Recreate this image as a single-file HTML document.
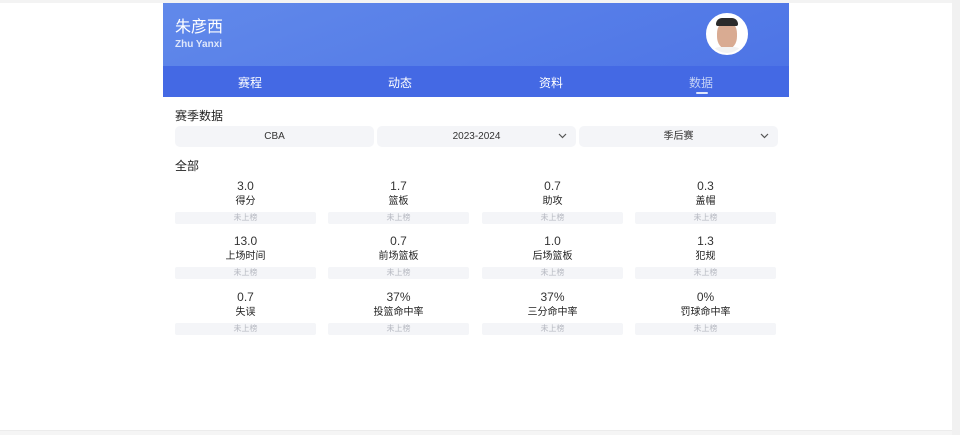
<!DOCTYPE html>
<html><head><meta charset="utf-8"><style>
*{margin:0;padding:0;box-sizing:border-box}
body{width:960px;height:435px;background:#fff;font-family:"Liberation Sans","Noto Sans CJK SC",sans-serif;position:relative;overflow:hidden;color:#222}
.top{position:absolute;left:0;top:0;width:952px;height:3px;background:#f3f3f3}
.sb{position:absolute;right:0;top:0;width:8px;height:435px;background:#f1f1f1}
.bot{position:absolute;left:0;top:430px;width:952px;height:5px;background:#f5f5f5;border-top:1px solid #ececec}
.ban{position:absolute;left:163px;top:3px;width:626px;height:63px;background:linear-gradient(160deg,#6189ea,#4d74e6)}
.nm{position:absolute;left:12px;top:14px;color:#fff;font-size:16px;line-height:22px}
.en{position:absolute;left:12px;top:36px;color:#dfe7fb;font-size:10px;font-weight:bold;line-height:12px}
.av{position:absolute;left:543px;top:10px;width:42px;height:42px;border-radius:50%;background:#fff;overflow:hidden;border:2px solid #fff}
.av i{position:absolute;left:9px;top:6px;width:20px;height:28px;border-radius:45%;background:#d9ab92}
.av b{position:absolute;left:8px;top:3px;width:22px;height:8px;border-radius:10px 10px 3px 3px;background:#2b2b2b}
.av u{position:absolute;left:2px;top:32px;width:34px;height:10px;background:#f2f2f2;border-radius:10px 10px 0 0}
.tabs{position:absolute;left:163px;top:66px;width:626px;height:31px;background:#4469e4}
.tabs span{position:absolute;top:8px;color:#fff;font-size:12px;transform:translateX(-50%)}
.ul{position:absolute;left:533px;top:26px;width:12px;height:2px;background:#dfe6fb;border-radius:1px}
.h{position:absolute;left:175px;font-size:12px;color:#222}
.sel{position:absolute;top:126px;width:199px;height:21px;background:#f4f5f8;border-radius:5px;font-size:10px;text-align:center;line-height:21px;color:#333}
.sel svg{position:absolute;right:9px;top:7px}
.c{position:absolute;width:141px;text-align:center}
.c .v{font-size:12px;color:#333;height:14px;line-height:14px}
.c .l{font-size:10px;color:#222;height:16px;line-height:14px;padding-top:2px}
.c .b{margin-top:3px;height:12px;background:#f4f5f8;border-radius:2px;font-size:8px;color:#b5b8c0;line-height:12px}
</style></head><body>
<div class="top"></div><div class="sb"></div><div class="bot"></div>
<div class="ban"><div class="nm">朱彦西</div><div class="en">Zhu Yanxi</div><div class="av"><i></i><b></b><u></u></div></div>
<div class="tabs"><span style="left:87px">赛程</span><span style="left:237px">动态</span><span style="left:388px">资料</span><span style="left:538px;color:#c5d2f6">数据</span><div class="ul"></div></div>
<div class="h" style="top:107px">赛季数据</div>
<div class="sel" style="left:175px">CBA</div>
<div class="sel" style="left:377px">2023-2024<svg width="9" height="6"><path d="M1 1l3.5 3.5L8 1" stroke="#555" fill="none" stroke-width="1.2"/></svg></div>
<div class="sel" style="left:579px">季后赛<svg width="9" height="6"><path d="M1 1l3.5 3.5L8 1" stroke="#555" fill="none" stroke-width="1.2"/></svg></div>
<div class="h" style="top:157px">全部</div>
<div class="c" style="left:175px;top:179px"><div class="v">3.0</div><div class="l">得分</div><div class="b">未上榜</div></div>
<div class="c" style="left:328px;top:179px"><div class="v">1.7</div><div class="l">篮板</div><div class="b">未上榜</div></div>
<div class="c" style="left:482px;top:179px"><div class="v">0.7</div><div class="l">助攻</div><div class="b">未上榜</div></div>
<div class="c" style="left:635px;top:179px"><div class="v">0.3</div><div class="l">盖帽</div><div class="b">未上榜</div></div>
<div class="c" style="left:175px;top:234px"><div class="v">13.0</div><div class="l">上场时间</div><div class="b">未上榜</div></div>
<div class="c" style="left:328px;top:234px"><div class="v">0.7</div><div class="l">前场篮板</div><div class="b">未上榜</div></div>
<div class="c" style="left:482px;top:234px"><div class="v">1.0</div><div class="l">后场篮板</div><div class="b">未上榜</div></div>
<div class="c" style="left:635px;top:234px"><div class="v">1.3</div><div class="l">犯规</div><div class="b">未上榜</div></div>
<div class="c" style="left:175px;top:290px"><div class="v">0.7</div><div class="l">失误</div><div class="b">未上榜</div></div>
<div class="c" style="left:328px;top:290px"><div class="v">37%</div><div class="l">投篮命中率</div><div class="b">未上榜</div></div>
<div class="c" style="left:482px;top:290px"><div class="v">37%</div><div class="l">三分命中率</div><div class="b">未上榜</div></div>
<div class="c" style="left:635px;top:290px"><div class="v">0%</div><div class="l">罚球命中率</div><div class="b">未上榜</div></div>
</body></html>
